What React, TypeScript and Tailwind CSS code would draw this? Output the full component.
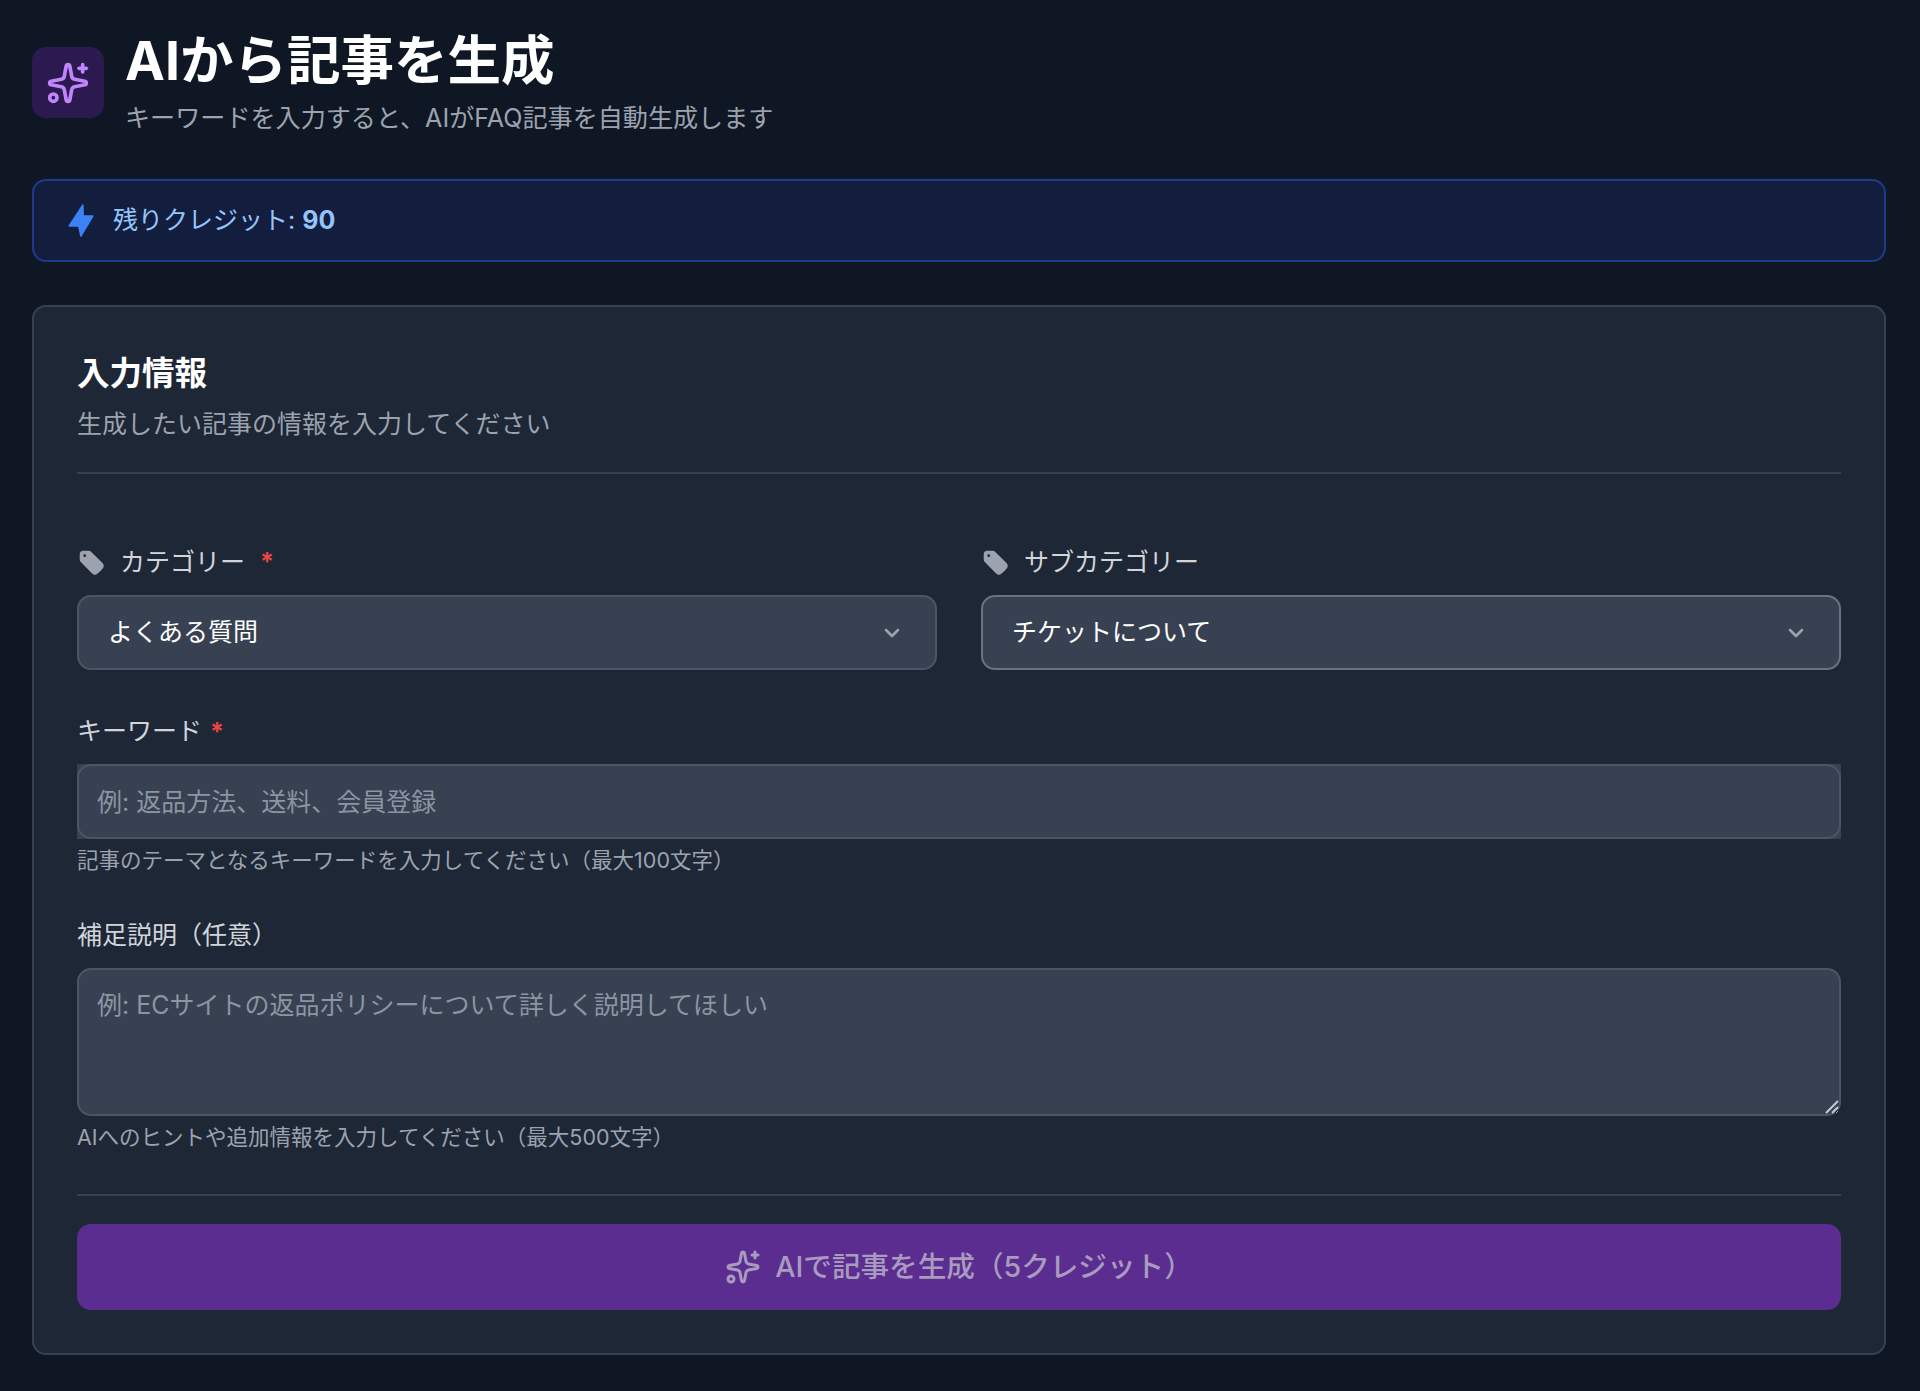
import { ChevronDown, Sparkles } from "lucide-react";
import { HiTag } from "react-icons/hi2";

const fontStack = "font-['Inter','Noto_Sans_CJK_JP',sans-serif]";

function RequiredMark() {
  return <span className="relative top-[1px] text-[#ef4444] text-[25px] font-bold leading-none">*</span>;
}

function SelectField({ label, value, required, active }: { label: string; value: string; required?: boolean; active?: boolean }) {
  return (
    <div className="flex flex-col flex-1 min-w-0">
      <div className="flex items-center h-[34px]">
        <HiTag className="w-[29px] h-[29px] text-[#9ca3af]" />
        <span className="ml-[14px] text-[25px] leading-[34px] text-[#d1d5db]">{label}</span>
        {required && <span className="ml-[15px]"><RequiredMark /></span>}
      </div>
      <button
        className={`mt-[16px] h-[75px] flex items-center justify-between pl-[29px] pr-[31px] rounded-[14px] bg-[#374151] border-2 text-[25px] text-white ${active ? "border-[#6b7280]" : "border-[#4b5563]"}`}
      >
        <span>{value}</span>
        <ChevronDown className="w-[24px] h-[24px] text-[#9ca3af]" strokeWidth={2.6} />
      </button>
    </div>
  );
}

export default function App() {
  return (
    <div className={`min-h-[1391px] bg-[#0f1724] pl-[32px] pr-[34px] pt-[28px] ${fontStack}`}>
      <div className="flex items-start gap-[21px]">
        <div className="mt-[19px] w-[72px] h-[71px] rounded-[14px] bg-[#2b1a4f] flex items-center justify-center">
          <Sparkles className="w-[44px] h-[44px] text-[#c084fc]" strokeWidth={2} />
        </div>
        <div>
          <h1 className="text-[53.5px] leading-[66px] font-bold text-white">AIから記事を生成</h1>
          <p className="mt-[7px] text-[25.1px] leading-[34px] text-[#9ca3af]">キーワードを入力すると、AIがFAQ記事を自動生成します</p>
        </div>
      </div>

      <div className="mt-[44px] h-[83px] rounded-[14px] border-2 border-[#1e3a8a] bg-[#131d3e] flex items-center pl-[34px]">
        <svg className="w-[26px] h-[33px] text-[#3b82f6]" viewBox="0 0 25.6 33" fill="currentColor" stroke="currentColor" strokeWidth="1.5" strokeLinejoin="round">
          <path d="M14.7 1 1 22h9.5l2.2 10L24.6 12H15z" />
        </svg>
        <span className="ml-[19px] text-[25px] text-[#93c5fd]">
          残りクレジット: <span className="font-bold">90</span>
        </span>
      </div>

      <div className="mt-[43px] h-[1050px] rounded-[14px] border-2 border-[#374151] bg-[#1e2735] px-[43px] pt-[46px]">
        <div className="h-[121px] border-b-2 border-[#374151]">
          <h2 className="text-[32.5px] leading-[42px] font-bold text-white">入力情報</h2>
          <p className="mt-[12px] text-[25px] leading-[34px] text-[#9ca3af]">生成したい記事の情報を入力してください</p>
        </div>

        <div className="mt-[71px] flex gap-[44px]">
          <SelectField label="カテゴリー" value="よくある質問" required />
          <SelectField label="サブカテゴリー" value="チケットについて" active />
        </div>

        <div className="mt-[45px] flex items-center h-[34px]">
          <span className="text-[25px] text-[#d1d5db]">キーワード</span>
          <span className="ml-[8px]"><RequiredMark /></span>
        </div>
        <div className="mt-[15px] bg-[#374151]">
          <input
            className="block w-full h-[75px] px-[18px] rounded-[14px] bg-[#374151] border-2 border-[#4b5563] text-[25px] text-white placeholder:text-[#8b95a3] outline-none"
            placeholder="例: 返品方法、送料、会員登録"
          />
        </div>
        <p className="mt-[6px] text-[21.5px] leading-[30px] text-[#9ca3af]">記事のテーマとなるキーワードを入力してください（最大100文字）</p>

        <div className="mt-[44px] flex items-center h-[34px]">
          <span className="text-[25px] text-[#d1d5db]">補足説明（任意）</span>
        </div>
        <div className="relative mt-[15px]">
          <textarea
            className="block w-full h-[148px] px-[18px] py-[17px] rounded-[14px] bg-[#374151] border-2 border-[#4b5563] text-[25px] text-white placeholder:text-[#8b95a3] outline-none"
            placeholder="例: ECサイトの返品ポリシーについて詳しく説明してほしい"
          />
          {/* resize grip */}
          <svg className="absolute right-[1px] bottom-[1px] w-[16px] h-[16px] pointer-events-none" viewBox="0 0 16 16" stroke="#c5cbd3" strokeWidth="2" fill="none">
            <path d="M2 14 14 2M8 14l6-6" />
          </svg>
        </div>
        <p className="mt-[6px] text-[21.5px] leading-[30px] text-[#9ca3af]">AIへのヒントや追加情報を入力してください（最大500文字）</p>

        <div className="mt-[42px] border-t-2 border-[#374151]" />
        <button className="mt-[28px] w-full h-[86px] rounded-[14px] bg-[#5b2d91] flex items-center justify-center gap-[14px] text-[28.6px] font-medium text-[#a99bbd]">
          <Sparkles className="w-[36px] h-[36px]" strokeWidth={2} />
          AIで記事を生成（5クレジット）
        </button>
      </div>
    </div>
  );
}
